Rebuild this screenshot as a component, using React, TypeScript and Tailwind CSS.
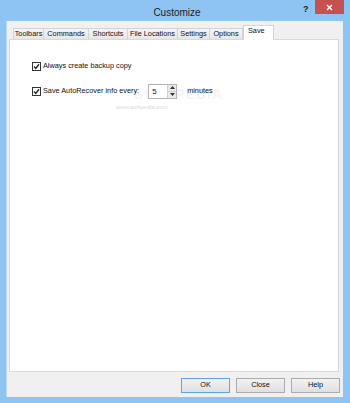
import React from 'react';

const tabs = [
  { label: 'Toolbars', w: 'w-[31px]' },
  { label: 'Commands', w: 'w-[46px]' },
  { label: 'Shortcuts', w: 'w-[40px]' },
  { label: 'File Locations', w: 'w-[51px]' },
  { label: 'Settings', w: 'w-[33px]' },
  { label: 'Options', w: 'w-[34px]' },
];

function Check() {
  return (
    <span className="w-[9px] h-[9px] border border-[#333] bg-white flex items-center justify-center shrink-0">
      <svg width="7" height="7" viewBox="0 0 7 7">
        <path d="M1 3.5 L2.8 5.4 L6 1.3" stroke="#222" strokeWidth="1.4" fill="none" />
      </svg>
    </span>
  );
}

function Btn({ label, primary }: { label: string; primary?: boolean }) {
  return (
    <div
      className={`w-[49px] h-[15px] flex items-center justify-center border bg-gradient-to-b from-[#f2f2f2] to-[#e0e0e0] text-[7.3px] text-[#111] ${
        primary ? 'border-[#5fa3e8]' : 'border-[#acacac]'
      }`}
    >
      {label}
    </div>
  );
}

export default function App() {
  return (
    <div
      className="w-[350px] h-[403px] bg-[#8ec4f3] flex flex-col"
      style={{ fontFamily: '"Liberation Sans", Arial, sans-serif' }}
    >
      {/* title bar */}
      <div className="h-[21px] flex items-start relative">
        <div className="flex-1 text-center text-[10px] text-[#222] pt-[5px] pl-[4px]">Customize</div>
        <div className="absolute left-[303px] top-[3px] text-[9px] font-bold text-[#222]">?</div>
        <div className="absolute right-[6px] top-0 w-[29px] h-[14px] bg-[#c75050] flex items-center justify-center">
          <svg width="7" height="7" viewBox="0 0 7 7">
            <path d="M1 1 L6 6 M6 1 L1 6" stroke="#fff" strokeWidth="1.4" />
          </svg>
        </div>
      </div>

      {/* dialog body */}
      <div className="ml-[6px] w-[337px] h-[376px] bg-[#f0f0f0] border-l border-[#b9d9f6] flex flex-col">
        {/* tab strip */}
        <div className="h-[18px] pt-[4px] pl-[6px] flex items-end relative z-10">
          {tabs.map((t) => (
            <div
              key={t.label}
              className={`${t.w} h-[11px] border border-b-0 border-[#d4d4d4] bg-gradient-to-b from-[#f4f4f4] to-[#e6e6e6] text-[7.3px] leading-[10px] text-center text-[#111] -mr-px`}
            >
              {t.label}
            </div>
          ))}
          <div className="h-[15px] w-[31px] px-[4px] ml-[1px] border border-b-0 border-[#d4d4d4] bg-white text-[7.3px] leading-[10px] text-[#111] mb-[-1px]">
            Save
          </div>
        </div>

        {/* panel */}
        <div className="ml-[2px] w-[330px] h-[333px] bg-white border border-[#d9d9d9] flex flex-col pl-[22px] pt-[21px] relative">
          <div className="absolute left-[124px] top-[44px] text-[14px] font-bold tracking-[1px] text-[#f5f5f5]">
            SOFTPEDIA
          </div>
          <div className="absolute left-[106px] top-[63px] text-[6px] text-[#dadada]">www.softpedia.com</div>
          <div className="flex items-center gap-[2px] text-[7.3px] text-[#111] relative">
            <Check />
            <span>Always create backup copy</span>
          </div>
          <div className="flex items-center gap-[2px] text-[7.3px] text-[#111] mt-[12px] relative">
            <Check />
            <span>Save AutoRecover info every:</span>
            <div className="ml-[7px] w-[29px] h-[15px] border border-[#b5b5b5] bg-white flex items-stretch">
              <span className="flex-1 pl-[3px] text-[8px] leading-[13px]">5</span>
              <div className="w-[9px] flex flex-col border-l border-[#d0d0d0] bg-[#eaeaea]">
                <div className="flex-1 flex items-center justify-center border-b border-[#d0d0d0]">
                  <svg width="5" height="3" viewBox="0 0 5 3"><path d="M0 3 L2.5 0 L5 3 Z" fill="#333" /></svg>
                </div>
                <div className="flex-1 flex items-center justify-center">
                  <svg width="5" height="3" viewBox="0 0 5 3"><path d="M0 0 L2.5 3 L5 0 Z" fill="#333" /></svg>
                </div>
              </div>
            </div>
            <span className="ml-[8px]">minutes</span>
          </div>
        </div>

        {/* buttons */}
        <div className="flex justify-end gap-[6px] pr-[3px] mt-[6px]">
          <Btn label="OK" primary />
          <Btn label="Close" />
          <Btn label="Help" />
        </div>
      </div>
    </div>
  );
}
